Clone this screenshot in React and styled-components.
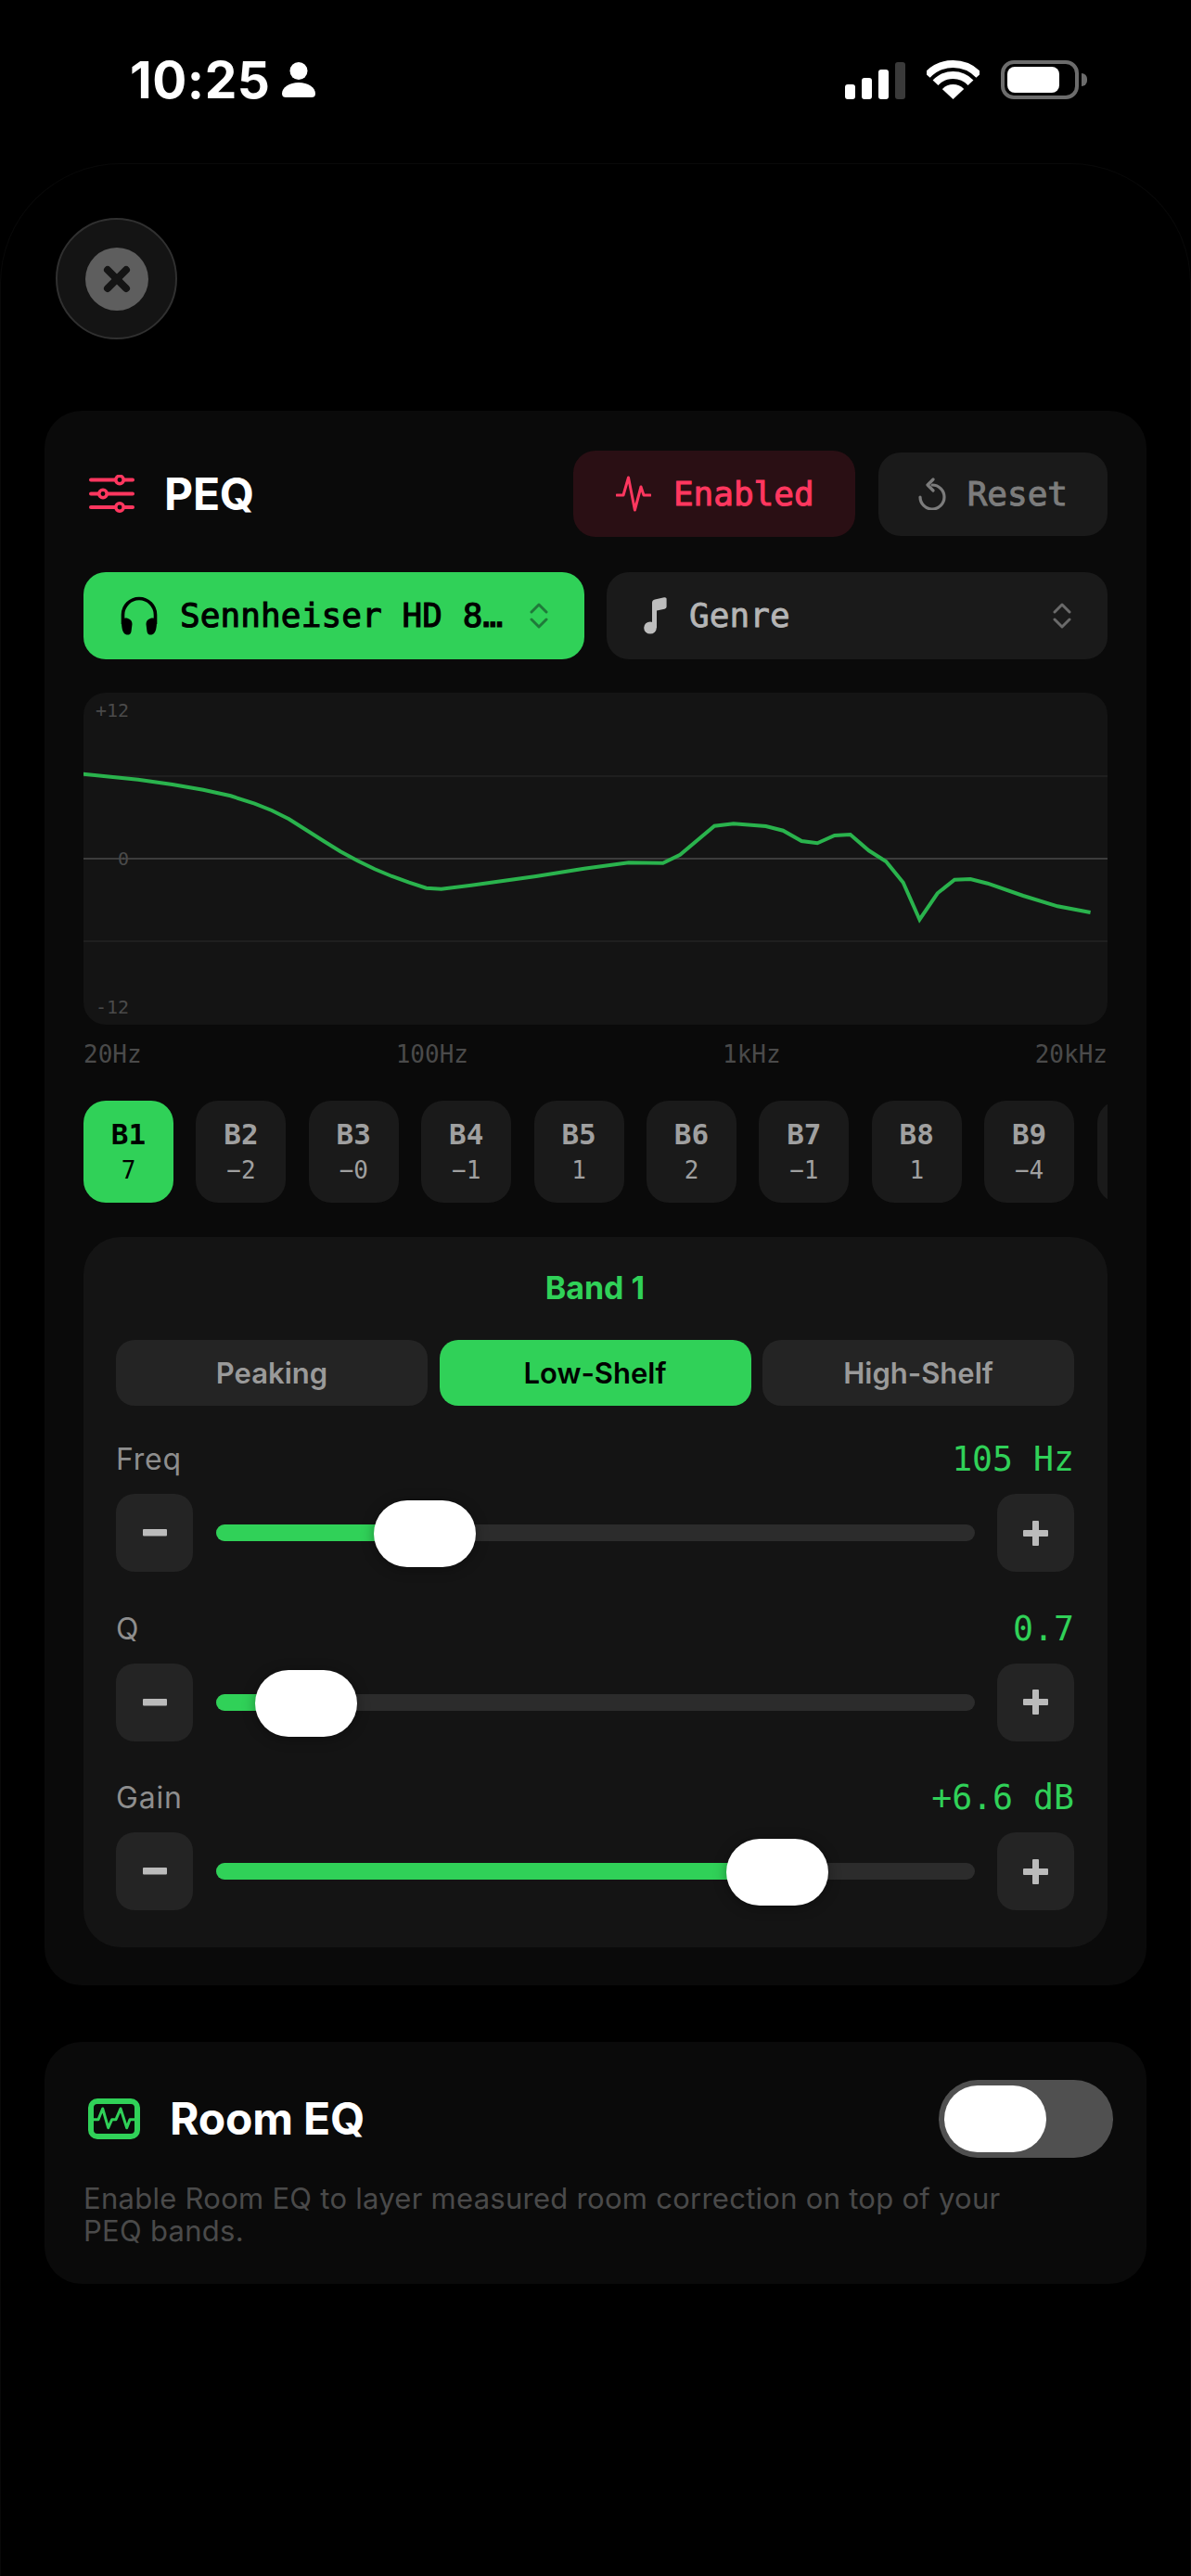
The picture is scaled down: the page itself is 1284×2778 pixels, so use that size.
import React from "react";
import styled, { createGlobalStyle } from "styled-components";

const Global = createGlobalStyle`
  html, body { margin: 0; padding: 0; background: #000; }
  * { box-sizing: border-box; }
`;
const GREEN = "#30d158";
const RED = "#ff375f";
const SANS = `Inter, "Liberation Sans", sans-serif`;
const MONO = `"DejaVu Sans Mono", "Liberation Mono", monospace`;

const Page = styled.div`
  width: 1284px; height: 2778px; overflow: hidden; background: #000; font-family: ${SANS};
`;
const StatusBar = styled.div`
  height: 176px; padding: 65px 121px 0 140px; display: flex; justify-content: space-between; align-items: flex-start;
`;
const StatusLeft = styled.div`display: flex; align-items: center; gap: 13px; height: 42px;`;
const Time = styled.span`font: 700 55px/42px ${SANS}; color: #fff; letter-spacing: 0.5px;`;
const StatusRight = styled.div`display: flex; align-items: flex-start; gap: 23px;`;
const Bars = styled.div`display: flex; align-items: flex-end; gap: 7px; height: 41px; margin-top: 1px;`;
const Bar = styled.i`display: block; width: 11px; height: ${p => p.$h}px; border-radius: 3px; background: ${p => p.$off ? "#3a3a3a" : "#fff"};`;
const Battery = styled.div`
  width: 84px; height: 42px; border: 4px solid #6c6c6c; border-radius: 14px; padding: 3px; position: relative;
  &::after { content: ""; position: absolute; left: 83px; top: 10px; width: 6px; height: 14px; border-radius: 0 6px 6px 0; background: #6c6c6c; }
`;
const BatteryFill = styled.div`width: 56px; height: 28px; background: #fff; border-radius: 8px;`;

const Sheet = styled.div`
  height: 2700px; border: 1px solid #090909; border-bottom: 0; border-radius: 130px 130px 0 0; padding: 58px 47px 0;
`;
const CloseBtn = styled.div`
  width: 131px; height: 131px; margin-left: 12px; border-radius: 50%; background: #141414; border: 2px solid #303030;
  display: flex; align-items: center; justify-content: center;
`;
const CloseInner = styled.div`
  width: 68px; height: 68px; border-radius: 50%; background: #5e5e5e; display: flex; align-items: center; justify-content: center;
`;
const Card = styled.section`
  width: 1188px; background: #0a0a0a; border-radius: 40px;
`;
const PeqCard = styled(Card)`margin-top: 77px; padding: 43px 42px 41px;`;
const Header = styled.div`display: flex; align-items: center; justify-content: space-between; height: 93px;`;
const TitleWrap = styled.div`display: flex; align-items: center; gap: 32px; padding-left: 6px;`;
const Title = styled.h1`margin: 0; font: 700 48px/56px ${SANS}; color: #fff; letter-spacing: -0.2px;`;
const HeaderBtns = styled.div`display: flex; align-items: center; gap: 25px;`;
const PillBtn = styled.div`
  display: flex; align-items: center; gap: ${p => p.$gap}px; height: ${p => p.$h}px; padding: 0 ${p => p.$pr}px 0 ${p => p.$pl}px; border-radius: 24px;
  background: ${p => p.$bg}; color: ${p => p.$c}; font: 400 36px/44px ${MONO}; -webkit-text-stroke: 1px ${p => p.$c};
`;
const SelectRow = styled.div`display: flex; gap: 24px; margin-top: 38px;`;
const Select = styled.div`
  flex: 1; min-width: 0; height: 94px; border-radius: 24px; display: flex; align-items: center; gap: 24px; padding: 0 39px 0 40px;
  background: ${p => p.$on ? GREEN : "#1a1a1a"}; color: ${p => p.$on ? "#000" : "#b5b5b5"}; font: 400 36px/44px ${MONO};
  -webkit-text-stroke: ${p => p.$on ? "1.1px #000" : "0.8px #b5b5b5"};
`;
const SelectText = styled.span`flex: 1; white-space: nowrap; overflow: hidden; letter-spacing: 0.1px;`;
const Chart = styled.div`
  margin-top: 36px; height: 358px; background: #141414; border-radius: 24px; position: relative; overflow: hidden;
  svg { display: block; }
`;
const ChartLabel = styled.span`
  position: absolute; right: ${p => p.$r}px; top: ${p => p.$t}px; font: 400 20px/24px ${MONO}; color: #4a4a4a;
`;
const AxisRow = styled.div`
  display: flex; justify-content: space-between; margin-top: 17px; height: 30px; font: 400 26px/30px ${MONO}; color: #4a4a4a;
`;
const BandRow = styled.div`display: flex; gap: 24.4px; margin-top: 35px; overflow: hidden;`;
const BandBtn = styled.div`
  flex: 0 0 97px; height: 110px; border-radius: 24px; padding-top: 19px; display: flex; flex-direction: column; align-items: center; gap: 6px;
  background: ${p => p.$on ? GREEN : "#1a1a1a"}; color: ${p => p.$on ? "#000" : "#a0a0a0"}; font-family: ${MONO};
`;
const BandName = styled.span`font-size: 31px; font-weight: 700; line-height: 34px;`;
const BandVal = styled.span`font-size: 26px; line-height: 32px;`;
const Panel = styled.div`margin-top: 37px; background: #141414; border-radius: 40px; padding: 35px 36px 40px 35px;`;
const PanelTitle = styled.div`font: 700 34px/40px ${SANS}; color: ${GREEN}; text-align: center;`;
const Types = styled.div`display: grid; grid-template-columns: repeat(3, 1fr); gap: 12.5px; margin-top: 36px;`;
const TypeBtn = styled.div`
  height: 71px; border-radius: 20px; display: flex; align-items: center; justify-content: center; font: 600 31px/40px ${SANS};
  background: ${p => p.$on ? GREEN : "#242424"}; color: ${p => p.$on ? "#000" : "#9a9a9a"};
`;
const Rows = styled.div`display: flex; flex-direction: column; gap: 39.5px; margin-top: 36px;`;
const LabelRow = styled.div`display: flex; justify-content: space-between; align-items: center; height: 44px;`;
const Label = styled.span`font: 400 32px/44px ${SANS}; letter-spacing: 0.8px; color: #8e8e8e;`;
const Value = styled.span`font: 400 36.5px/44px ${MONO}; color: ${GREEN};`;
const Controls = styled.div`display: flex; align-items: center; gap: 24.5px; margin-top: 15px;`;
const StepBtn = styled.div`
  flex: 0 0 83px; height: 84px; border-radius: 20px; background: #242424; display: flex; align-items: center; justify-content: center;
`;
const Track = styled.div`flex: 1; height: 18px; border-radius: 9px; background: #2c2c2c; position: relative;`;
const Fill = styled.div`height: 100%; border-radius: 9px 0 0 9px; background: ${GREEN};`;
const Thumb = styled.div`
  position: absolute; top: 50%; width: 110px; height: 72px; margin-left: -55px; margin-top: -35px; border-radius: 36px; background: #fff;
  box-shadow: 0 2px 14px rgba(0,0,0,.35);
`;
const RoomCard = styled(Card)`margin-top: 61px; padding: 41px 36px 40px 42px;`;
const RoomHead = styled.div`display: flex; align-items: center; justify-content: space-between; height: 84px;`;
const RoomTitleWrap = styled.div`display: flex; align-items: center; gap: 32px; padding-left: 5px;`;
const Toggle = styled.div`width: 188px; height: 84px; border-radius: 42px; background: #505050; padding: 6px;`;
const ToggleKnob = styled.div`width: 110px; height: 72px; border-radius: 36px; background: #fff;`;
const Desc = styled.p`margin: 26px 0 0; width: 1030px; font: 400 31px/35px ${SANS}; letter-spacing: 0.27px; color: #4a4a4a;`;
const FixedIcon = styled.svg`flex: none;`;

const Chevrons = ({ color }) => (
  <FixedIcon width="20" height="28" viewBox="0 0 20 28" fill="none" stroke={color} strokeWidth="3" strokeLinecap="round" strokeLinejoin="round">
    <path d="M2 10 L10 2 L18 10" /><path d="M2 18 L10 26 L18 18" />
  </FixedIcon>
);
const Person = () => (
  <svg width="36" height="38" viewBox="0 0 36 38" fill="#fff">
    <circle cx="18" cy="9.5" r="9.5" />
    <path d="M0 34 C0 27 8 22 18 22 C28 22 36 27 36 34 C36 37 34 38 32 38 H4 C2 38 0 37 0 34 Z" />
  </svg>
);
const Wifi = () => (
  <svg width="57" height="42" viewBox="0 0 57 42" fill="none" stroke="#fff" strokeWidth="8">
    <path d="M0.7 16.1 A38 38 0 0 1 56.3 16.1" />
    <path d="M9.5 24.3 A26 26 0 0 1 47.5 24.3" />
    <path d="M28.5 42 L16.8 31.1 A16 16 0 0 1 40.2 31.1 Z" fill="#fff" stroke="none" />
  </svg>
);
const SlidersIcon = () => (
  <FixedIcon width="49" height="41" viewBox="0 0 49 41" fill="none" stroke={RED} strokeLinecap="round">
    <g strokeWidth="4"><path d="M2 5.5H47" /><path d="M2 20.5H47" /><path d="M2 35H47" /></g>
    <g strokeWidth="3.5" fill="#0a0a0a">
      <circle cx="33" cy="5.5" r="4.2" /><circle cx="15" cy="20.5" r="4.2" /><circle cx="33" cy="35" r="4.2" />
    </g>
  </FixedIcon>
);
const Pulse = () => (
  <svg width="38" height="39" viewBox="0 0 38 39" fill="none" stroke={RED} strokeWidth="3" strokeLinecap="round" strokeLinejoin="round">
    <path d="M1 21 H8 L13.5 2 L20.4 37 L27 12 L30 21 H37" />
  </svg>
);
const ResetIcon = () => (
  <svg width="30" height="35" viewBox="0 0 30 35" fill="none" stroke="#7c7c7c" strokeWidth="3.2" strokeLinecap="round" strokeLinejoin="round">
    <path d="M15 8 A13 13 0 1 1 2 21" /><path d="M16 2 L10 8 L16 14" />
  </svg>
);
const Headphones = () => (
  <FixedIcon width="40" height="42" viewBox="0 0 40 42">
    <path d="M2.5 30 V20 A17.5 17.5 0 0 1 37.5 20 V30" fill="none" stroke="#000" strokeWidth="3.6" />
    <path d="M1 27 C1 23.5 5 23 8 24 C11 25 12.5 27 12.5 30 L11.5 38 C11 41 9 42 6.5 41.5 C3 41 1 36 1 27 Z" />
    <path d="M39 27 C39 23.5 35 23 32 24 C29 25 27.5 27 27.5 30 L28.5 38 C29 41 31 42 33.5 41.5 C37 41 39 36 39 27 Z" />
  </FixedIcon>
);
const Note = () => (
  <FixedIcon width="25" height="40" viewBox="0 0 25 40" fill="#bdbdbd">
    <ellipse cx="7" cy="33" rx="6.8" ry="6.6" />
    <path d="M9 33 V6 C9 4 10 3 12 2.4 L22 0.2 C23.6 -0.1 24.6 0.6 24.6 2 V10 C24.6 11.5 23.8 12.4 22.4 12.7 L14 14.6 V33 Z" />
  </FixedIcon>
);
const RoomIcon = () => (
  <FixedIcon width="56" height="44" viewBox="0 0 56 44" fill="none" stroke={GREEN} strokeLinejoin="round">
    <rect x="3" y="3" width="50" height="38" rx="7" strokeWidth="6" />
    <path d="M5 22.7 H11 L15.7 11 L21.7 31.7 L25.7 22.7 H30 L35 11 L41.7 31.7 L45 22.7 H51.7" strokeWidth="3" />
  </FixedIcon>
);
const MinusIcon = () => (
  <svg width="26" height="8" viewBox="0 0 26 8"><rect width="26" height="7.5" rx="1" fill="#bbb" /></svg>
);
const PlusIcon = () => (
  <svg width="27" height="27" viewBox="0 0 27 27" fill="#bbb">
    <rect x="0" y="10" width="27" height="7" rx="1" /><rect x="10" y="0" width="7" height="27" rx="1" />
  </svg>
);
const CloseX = () => (
  <svg width="30" height="30" viewBox="0 0 30 30" stroke="#141414" strokeWidth="8" strokeLinecap="round">
    <path d="M5 5 L25 25" /><path d="M25 5 L5 25" />
  </svg>
);

const CURVE_Z = [[40,314],[80,323],[120,332],[170,348],[215,365],[255,385],[290,410],[315,432],[340,460],[365,495],[390,530],[415,565],[440,595],[465,622],[490,645],[515,665],[540,683],[562,686],[620,670],[700,645],[770,620],[835,601],[885,602],[910,575],[960,482],[988,475],[1035,483],[1060,497],[1087,531],[1110,538],[1135,513],[1158,510],[1185,562],[1210,597],[1235,665],[1259,785],[1285,700],[1310,656],[1333,654],[1358,668],[1410,708],[1460,742],[1508,762]];
const curve = CURVE_Z.map(([x, y]) => `${(60 + x / 1.3517 - 90).toFixed(1)},${(730 + y / 3 - 747).toFixed(1)}`).join(" ");

const BANDS = [["B1","7"],["B2","−2"],["B3","−0"],["B4","−1"],["B5","1"],["B6","2"],["B7","−1"],["B8","1"],["B9","−4"],["B10","3"]];
const SLIDERS = [["Freq","105 Hz",27.6],["Q","0.7",11.9],["Gain","+6.6 dB",74]];

export default function App() {
  return (
    <Page>
      <Global />
      <StatusBar>
        <StatusLeft><Time>10:25</Time><Person /></StatusLeft>
        <StatusRight>
          <Bars>
            <Bar $h={16} /><Bar $h={23} /><Bar $h={32} /><Bar $h={40} $off />
          </Bars>
          <Wifi />
          <Battery><BatteryFill /></Battery>
        </StatusRight>
      </StatusBar>
      <Sheet>
        <CloseBtn><CloseInner><CloseX /></CloseInner></CloseBtn>
        <PeqCard>
          <Header>
            <TitleWrap><SlidersIcon /><Title>PEQ</Title></TitleWrap>
            <HeaderBtns>
              <PillBtn $h={93} $pl={46} $pr={44} $gap={24} $bg="#2a0f14" $c={RED}><Pulse />Enabled</PillBtn>
              <PillBtn $h={90} $pl={43} $pr={43} $gap={23} $bg="#1a1a1a" $c="#7c7c7c"><ResetIcon />Reset</PillBtn>
            </HeaderBtns>
          </Header>
          <SelectRow>
            <Select $on><Headphones /><SelectText>Sennheiser HD 8…</SelectText><Chevrons color="#1f7a3a" /></Select>
            <Select><Note /><SelectText>Genre</SelectText><Chevrons color="#6a6a6a" /></Select>
          </SelectRow>
          <Chart>
            <svg width="1104" height="358" viewBox="0 0 1104 358">
              <path d="M0 90H1104M0 268H1104" stroke="#1f1f1f" strokeWidth="2" />
              <path d="M0 179H1104" stroke="#3c3c3c" strokeWidth="2" />
              <polyline points={curve} fill="none" stroke="#2ab34d" strokeWidth="4" strokeLinejoin="miter" />
            </svg>
            <ChartLabel $r={1055} $t={7}>+12</ChartLabel>
            <ChartLabel $r={1055} $t={167}>0</ChartLabel>
            <ChartLabel $r={1055} $t={327}>-12</ChartLabel>
          </Chart>
          <AxisRow><span>20Hz</span><span>100Hz</span><span>1kHz</span><span>20kHz</span></AxisRow>
          <BandRow>
            {BANDS.map(([n, v], i) => (
              <BandBtn key={n} $on={i === 0}><BandName>{n}</BandName><BandVal>{v}</BandVal></BandBtn>
            ))}
          </BandRow>
          <Panel>
            <PanelTitle>Band 1</PanelTitle>
            <Types>
              <TypeBtn>Peaking</TypeBtn>
              <TypeBtn $on>Low-Shelf</TypeBtn>
              <TypeBtn>High-Shelf</TypeBtn>
            </Types>
            <Rows>
              {SLIDERS.map(([l, v, pct]) => (
                <div key={l}>
                  <LabelRow><Label>{l}</Label><Value>{v}</Value></LabelRow>
                  <Controls>
                    <StepBtn><MinusIcon /></StepBtn>
                    <Track>
                      <Fill style={{ width: `${pct}%` }} />
                      <Thumb style={{ left: `${pct}%` }} />
                    </Track>
                    <StepBtn><PlusIcon /></StepBtn>
                  </Controls>
                </div>
              ))}
            </Rows>
          </Panel>
        </PeqCard>
        <RoomCard>
          <RoomHead>
            <RoomTitleWrap><RoomIcon /><Title>Room EQ</Title></RoomTitleWrap>
            <Toggle><ToggleKnob /></Toggle>
          </RoomHead>
          <Desc>Enable Room EQ to layer measured room correction on top of your PEQ bands.</Desc>
        </RoomCard>
      </Sheet>
    </Page>
  );
}
